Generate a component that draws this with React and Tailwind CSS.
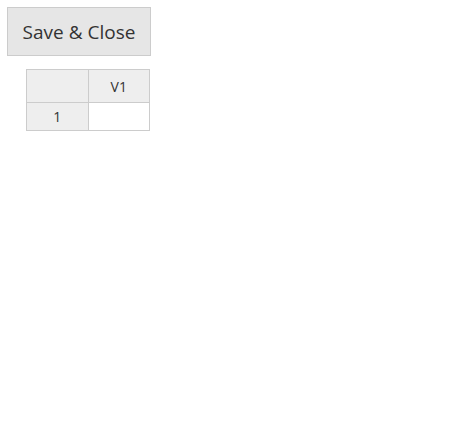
export default function App() {
  return (
    <div className="min-h-[422px] bg-white font-['Open_Sans',sans-serif] text-[#333]">
      <div className="pl-[7px] pt-[7px]">
        <button className="h-[49px] w-[144px] border border-[#cccccc] bg-[#e6e6e6] pt-[2px] text-[19px] text-[#333]">
          Save &amp; Close
        </button>
      </div>
      <table className="ml-[26px] mt-[13px] w-[124px] table-fixed border-collapse text-[14px]">
        <tbody>
          <tr className="h-[33px]">
            <td className="border border-[#cccccc] bg-[#eeeeee]"></td>
            <td className="border border-[#cccccc] bg-[#eeeeee] text-center">V1</td>
          </tr>
          <tr className="h-[28px]">
            <td className="border border-[#cccccc] bg-[#eeeeee] text-center">1</td>
            <td className="border border-[#cccccc] bg-white"></td>
          </tr>
        </tbody>
      </table>
    </div>
  );
}
